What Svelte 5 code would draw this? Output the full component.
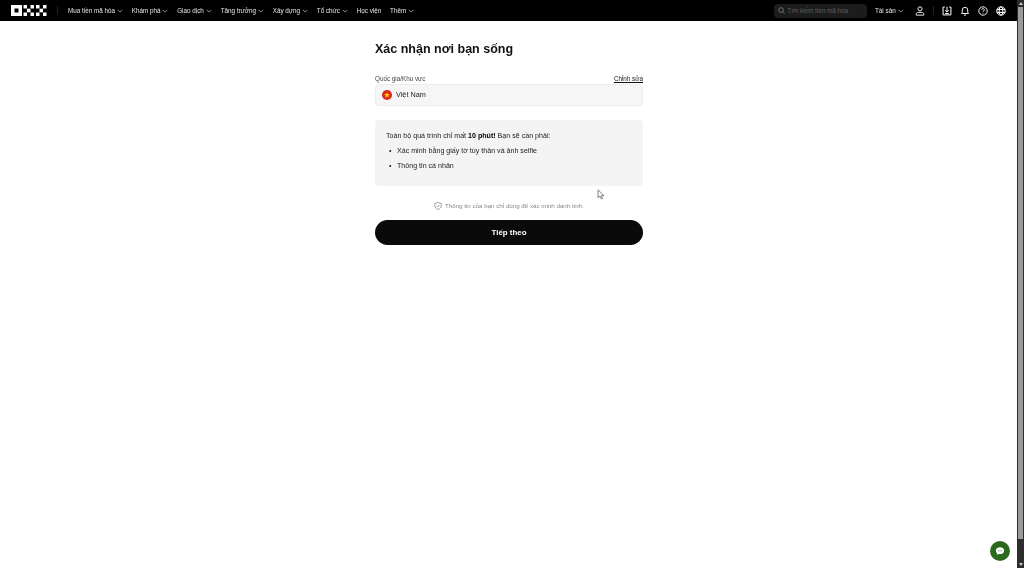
<script lang="ts">
    const menu = [
        { label: 'Mua tiền mã hóa', caret: true },
        { label: 'Khám phá', caret: true },
        { label: 'Giao dịch', caret: true },
        { label: 'Tăng trưởng', caret: true },
        { label: 'Xây dựng', caret: true },
        { label: 'Tổ chức', caret: true },
        { label: 'Học viện', caret: false },
        { label: 'Thêm', caret: true }
    ];
</script>

{#snippet caret()}
    <svg class="caret" viewBox="0 0 8 5" width="6" height="4" fill="none" stroke="currentColor" stroke-width="1">
        <path d="M1 1l3 3 3-3" />
    </svg>
{/snippet}

<div class="shell">
    <div class="page">
        <header class="topbar">
            <svg class="logo" viewBox="0 0 36 11" width="36" height="11" fill="#fff">
                <path fill-rule="evenodd" d="M0 0h11v11H0zM3.500 3.500v4h4v-4z" />
                <rect x="12.500" y="0" width="3.500" height="3.500" />
                <rect x="12.500" y="7.500" width="3.500" height="3.500" />
                <rect x="16" y="3.700" width="3.500" height="3.600" />
                <rect x="19.500" y="0" width="3.500" height="3.500" />
                <rect x="19.500" y="7.500" width="3.500" height="3.500" />
                <rect x="25" y="0" width="3.500" height="3.500" />
                <rect x="25" y="7.500" width="3.500" height="3.500" />
                <rect x="28.500" y="3.700" width="3.500" height="3.600" />
                <rect x="32" y="0" width="3.500" height="3.500" />
                <rect x="32" y="7.500" width="3.500" height="3.500" />
            </svg>
            <span class="sep left"></span>
            <nav class="menu">
                {#each menu as item}
                    <span class="menu-item">
                        {item.label}
                        {#if item.caret}{@render caret()}{/if}
                    </span>
                {/each}
            </nav>
            <div class="tools">
                <div class="search">
                    <svg viewBox="0 0 12 12" width="7" height="7" fill="none" stroke="#8a8a8a" stroke-width="1.300">
                        <circle cx="5.200" cy="5.200" r="4" />
                        <path d="M8.200 8.200l3 3" />
                    </svg>
                    <span>Tìm kiếm tiền mã hóa</span>
                </div>
                <span class="menu-item assets">Tài sản {@render caret()}</span>
                <svg class="icon" viewBox="0 0 14 14" fill="none" stroke="#fff" stroke-width="1.300">
                    <circle cx="7" cy="4" r="2.800" />
                    <path d="M1.800 12.800v-1.300c0-1.500 1.100-2.500 2.600-2.500h5.200c1.500 0 2.600 1 2.600 2.500v1.300z" />
                </svg>
                <span class="sep"></span>
                <svg class="icon" viewBox="0 0 14 14" fill="none" stroke="#fff" stroke-width="1.400">
                    <path d="M4 1.500H1.500v11h11v-11H10" />
                    <path d="M7 1v7M4.500 6L7 8.500 9.500 6M4.500 10.500h5" />
                </svg>
                <svg class="icon" viewBox="0 0 14 14" fill="none" stroke="#fff" stroke-width="1.300">
                    <path d="M2 10.500h10l-1.200-1.800V5.600a3.800 3.800 0 0 0-7.600 0v3.100zM5.500 12.700h3" />
                </svg>
                <svg class="icon" viewBox="0 0 14 14" fill="none" stroke="#fff" stroke-width="1.300">
                    <circle cx="7" cy="7" r="5.900" />
                    <path d="M5.200 5.400a1.800 1.800 0 1 1 2.700 1.600c-.6.400-.9.700-.9 1.400M7 9.600v1" />
                </svg>
                <svg class="icon" viewBox="0 0 14 14" fill="none" stroke="#fff" stroke-width="1.400">
                    <circle cx="7" cy="7" r="5.900" />
                    <ellipse cx="7" cy="7" rx="2.600" ry="5.900" />
                    <path d="M1.100 5h11.800M1.100 9h11.800" />
                </svg>
            </div>
        </header>

        <main class="form">
            <h1>Xác nhận nơi bạn sống</h1>
            <div class="label-row">
                <span>Quốc gia/Khu vực</span>
                <span class="edit">Chỉnh sửa</span>
            </div>
            <div class="country">
                <svg class="flag" viewBox="0 0 10 10" width="10" height="10">
                    <circle cx="5" cy="5" r="5" fill="#da251d" />
                    <path d="M5 1.900l.8 2.200h2.300L6.200 5.500l.7 2.300L5 6.400 3.100 7.800l.7-2.300-1.900-1.400h2.300z" fill="#ffcd00" />
                </svg>
                Việt Nam
            </div>
            <section class="info">
                <p>Toàn bộ quá trình chỉ mất <b>10 phút!</b> Bạn sẽ cần phải:</p>
                <ul>
                    <li>Xác minh bằng giấy tờ tùy thân và ảnh selfie</li>
                    <li>Thông tin cá nhân</li>
                </ul>
            </section>
            <div class="note">
                <svg viewBox="0 0 12 12" width="8" height="8" fill="none" stroke="#777" stroke-width="1">
                    <path d="M6 .7l4.800 1.500v3.300c0 3-2.200 4.900-4.800 5.800-2.600-.9-4.800-2.800-4.800-5.800V2.200z" />
                    <path d="M3.800 5.900l1.600 1.600 2.900-3" />
                </svg>
                Thông tin của bạn chỉ dùng để xác minh danh tính.
            </div>
            <button class="next">Tiếp theo</button>
        </main>
    </div>

    <div class="scrollbar">
        <span class="arrow up"></span>
        <span class="thumb"></span>
        <span class="track"></span>
        <span class="arrow down"></span>
    </div>

    <svg class="cursor" viewBox="0 0 8 11" width="8" height="11" fill="#fff" stroke="#666" stroke-width="0.800">
        <path d="M1 .8v8l2-1.700 1.300 2.900 1.300-.6-1.300-2.800h2.600z" />
    </svg>

    <div class="chat">
        <svg viewBox="0 0 12 12" width="10" height="10" fill="#fff">
            <path d="M6 1.500c-2.800 0-5 1.800-5 4.100 0 1.200.6 2.300 1.600 3L2.300 10.500l2.300-1c.4.100.9.200 1.400.2 2.800 0 5-1.800 5-4.100S8.800 1.500 6 1.500z" />
            <circle cx="4" cy="5.600" r=".6" fill="#2b6a1d" />
            <circle cx="6" cy="5.600" r=".6" fill="#2b6a1d" />
            <circle cx="8" cy="5.600" r=".6" fill="#2b6a1d" />
        </svg>
    </div>
</div>

<style>
    :global(body) {
        margin: 0;
        background: #fff;
        overflow: hidden;
        font-family: 'Liberation Sans', Arial, sans-serif;
    }

    .shell {
        display: flex;
        height: 568px;
        position: relative;
    }

    .page {
        flex: 1;
        min-width: 0;
    }

    .topbar {
        display: flex;
        align-items: center;
        height: 21px;
        background: #000;
        color: #e6e6e6;
        padding: 0 11px;
    }

    .logo {
        flex: none;
    }

    .sep {
        width: 1px;
        height: 9px;
        background: #222;
    }

    .sep.left {
        margin: 0 10px;
    }

    .menu {
        display: flex;
        gap: 8.800px;
        will-change: transform;
    }

    .menu-item {
        display: flex;
        align-items: center;
        gap: 2px;
        font-size: 6.300px;
        white-space: nowrap;
    }

    .caret {
        color: #bbb;
    }

    .tools {
        margin-left: auto;
        display: flex;
        align-items: center;
        gap: 8px;
    }

    .search {
        display: flex;
        align-items: center;
        gap: 2px;
        width: 89px;
        height: 14px;
        padding-left: 4px;
        background: #1c1c1c;
        border-radius: 4px;
        font-size: 6.300px;
        color: #5c5c5c;
    }

    .assets {
        margin-right: 3px;
        will-change: transform;
    }

    .icon {
        width: 10px;
        height: 10px;
    }

    .form {
        width: 268px;
        margin-left: 375px;
        padding-top: 19px;
        color: #111;
        will-change: transform;
    }

    h1 {
        margin: 0 0 16px;
        font-size: 12.500px;
        line-height: 18px;
        font-weight: 700;
    }

    .label-row {
        display: flex;
        justify-content: space-between;
        font-size: 6.300px;
        line-height: 9px;
        color: #444;
    }

    .edit {
        color: #111;
        text-decoration: underline;
    }

    .country {
        display: flex;
        align-items: center;
        gap: 4px;
        height: 22px;
        box-sizing: border-box;
        margin-top: 1px;
        padding: 0 0 1px 6px;
        background: #f6f6f6;
        border: 1px solid #ececec;
        border-radius: 4px;
        font-size: 7.300px;
        color: #222;
    }

    .info {
        margin-top: 14px;
        height: 66px;
        padding: 11px 11px 0;
        box-sizing: border-box;
        background: #f4f4f4;
        border-radius: 4px;
        font-size: 7.100px;
        color: #222;
    }

    .info p {
        margin: 0;
        line-height: 10px;
    }

    .info b {
        color: #000;
    }

    ul {
        list-style: none;
        margin: 5px 0 0;
        padding-left: 3px;
    }

    li {
        display: flex;
        line-height: 10px;
        margin-bottom: 5px;
    }

    li::before {
        content: '•';
        width: 8px;
    }

    .note {
        display: flex;
        align-items: center;
        justify-content: center;
        gap: 3px;
        margin-top: 15px;
        font-size: 6.200px;
        line-height: 9px;
        color: #888;
    }

    .next {
        display: block;
        width: 100%;
        height: 25px;
        margin-top: 10px;
        border: 0;
        border-radius: 13px;
        background: #0a0a0a;
        color: #fff;
        font: 700 7.900px 'Liberation Sans', Arial, sans-serif;
    }

    .scrollbar {
        flex: none;
        width: 7px;
        background: #2c2c2c;
        display: flex;
        flex-direction: column;
        align-items: center;
    }

    .thumb {
        height: 532px;
        width: 5px;
        background: #9b9b9b;
    }

    .track {
        flex: 1;
    }

    .arrow {
        width: 0;
        height: 0;
        margin: 2px 0;
        border-left: 2px solid transparent;
        border-right: 2px solid transparent;
    }

    .arrow.up {
        border-bottom: 3px solid #ccc;
    }

    .arrow.down {
        border-top: 3px solid #ccc;
    }

    .cursor {
        position: absolute;
        left: 597px;
        top: 189px;
    }

    .chat {
        position: absolute;
        right: 14px;
        bottom: 7px;
        width: 20px;
        height: 20px;
        border-radius: 50%;
        background: #2b6a1d;
        display: flex;
        align-items: center;
        justify-content: center;
    }
</style>
